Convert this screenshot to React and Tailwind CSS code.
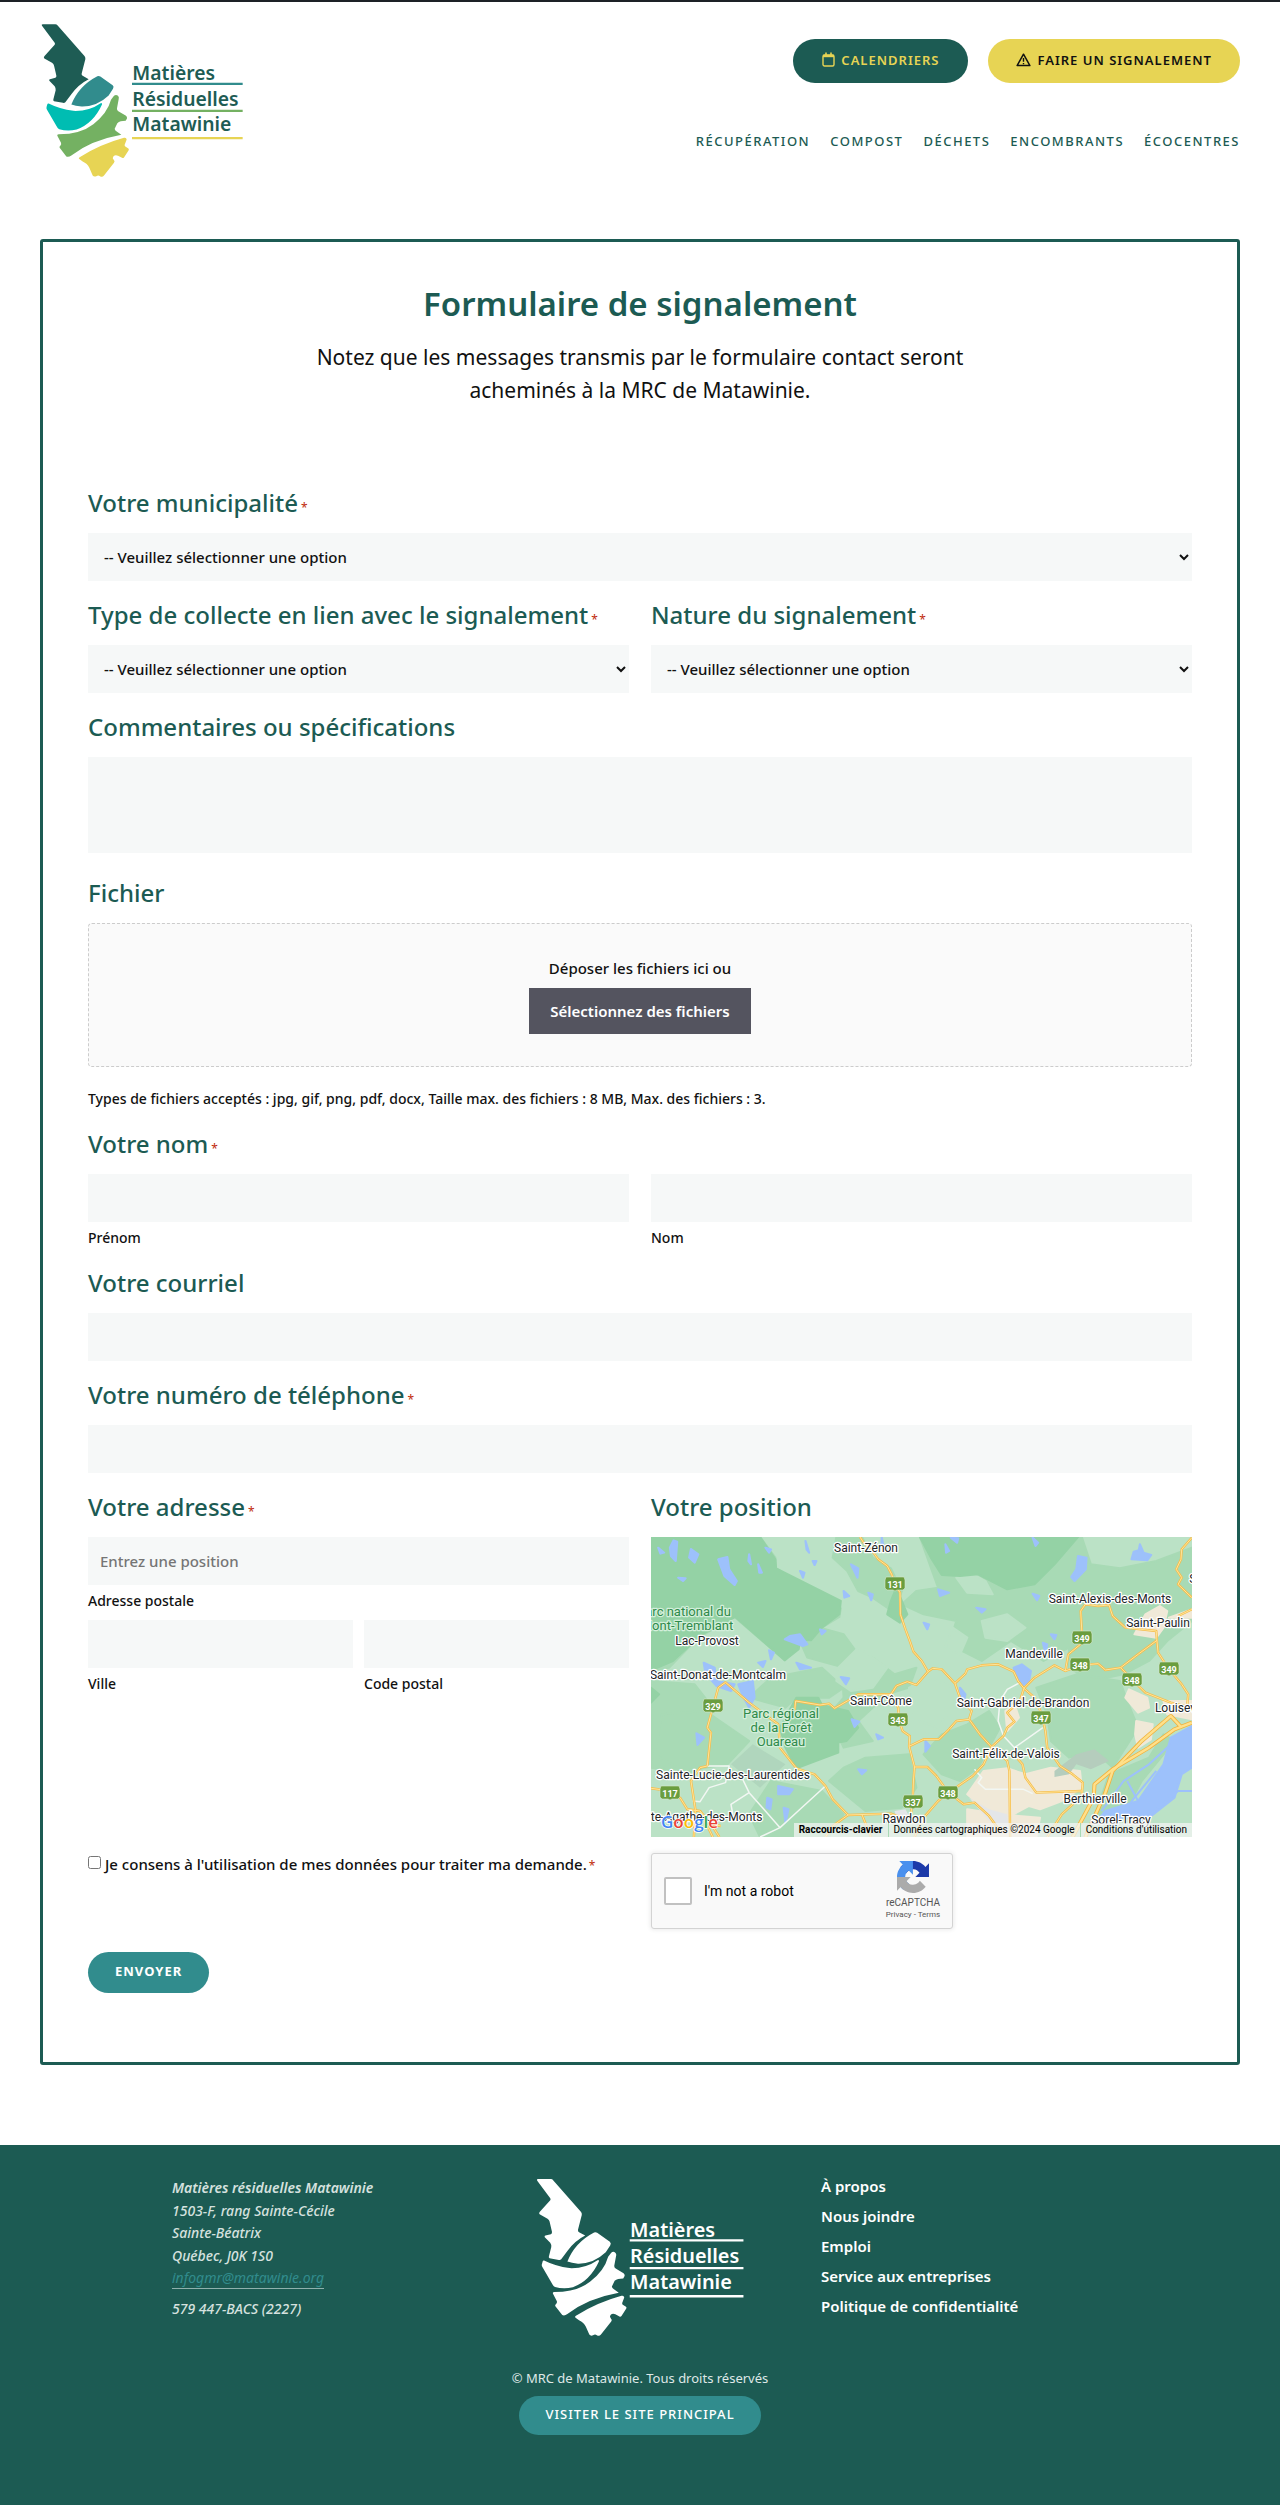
import React from "react";

const LOGO_SHAPES = [
  { fill: "#1e5c54", d: "M38 72 L76 72 Q80 72 83 76 L164 168 Q167 172 166 177 L155 220 Q154 225 158 227 L176 237 Q146 252 124 282 L106 306 Q103 309 99 308 L72 303 Q69 302 70 298 L77 270 Q78 264 74 258 L58 242 Q56 238 60 237 L76 233 Q80 231 79 226 L72 196 Q71 191 66 188 L43 175 Q40 172 43 168 L74 134 Q76 131 74 128 L36 77 Q33 72 38 72Z" },
  { fill: "#318c8d", d: "M202 228 Q207 226 211 229 L248 255 Q253 259 249 266 L236 286 Q200 320 155 319 Q136 318 124 313 Q146 257 202 228Z" },
  { fill: "#00bdb2", d: "M56 310 Q90 327 130 332 Q176 334 212 309 Q217 307 216 313 Q190 370 140 388 Q112 394 88 387 Q84 386 82 382 L51 329 Q48 324 50 319 L52 312 Q53 309 56 310Z" },
  { fill: "#74b162", d: "M252 287 Q258 282 264 287 Q268 291 266 297 L261 324 Q260 330 265 333 L288 347 Q292 350 291 355 L287 362 Q270 362 262 369 L254 386 Q254 391 260 394 L274 404 Q184 420 124 466 Q116 472 109 469 L105 464 L89 443 Q87 440 91 437 Q95 433 93 428 L82 407 Q80 402 86 402 Q152 402 190 372 Q232 340 243 299Z" },
  { fill: "#e7d454", d: "M282 413 Q289 411 290 418 L284 434 Q283 438 287 440 L294 444 Q298 446 296 450 L282 472 Q279 475 276 473 L264 467 Q256 463 250 469 Q246 474 251 479 Q256 483 252 488 L222 526 Q217 532 210 528 Q205 524 199 528 Q192 531 188 526 L178 503 Q172 490 158 484 L147 476 Q145 473 149 471 Q212 432 282 413Z" },
];

function Logo({ mono, className }) {
  const ink = mono ? "#ffffff" : "#1e5c54";
  return (
    <svg viewBox="30 66 612 470" className={className} role="img" aria-label="Matières Résiduelles Matawinie">
      {LOGO_SHAPES.map((s) => (
        <path key={s.fill} d={s.d} fill={mono ? "#ffffff" : s.fill} />
      ))}
      <g fill={ink} fontFamily='"Noto Sans", sans-serif' fontSize="58" fontWeight="600">
        <text x="307" y="240">Matières</text>
        <text x="307" y="317">Résiduelles</text>
        <text x="307" y="394">Matawinie</text>
      </g>
      <g strokeWidth="7">
        <path d="M306 251H638" stroke={mono ? ink : "#318c8d"} />
        <path d="M306 332H638" stroke={mono ? ink : "#74b162"} />
        <path d="M306 414H638" stroke={mono ? ink : "#e7d454"} />
      </g>
    </svg>
  );
}

function CalendarIcon() {
  return (
    <svg width="13" height="15" viewBox="0 0 13 15" fill="none" stroke="currentColor" aria-hidden="true">
      <rect x="1" y="3" width="11" height="11" rx="1.5" strokeWidth="1.4" />
      <path d="M1 4h11" strokeWidth="2.4" />
      <path d="M4 0.5v3M9 0.5v3" strokeWidth="1.6" />
    </svg>
  );
}

function WarningIcon() {
  return (
    <svg width="15" height="14" viewBox="0 0 15 14" fill="none" stroke="currentColor" strokeLinejoin="round" aria-hidden="true">
      <path d="M7.5 1.2 13.9 12.6H1.1Z" strokeWidth="1.5" />
      <path d="M7.5 5v3.8M7.5 10v1.2" strokeWidth="1.4" />
    </svg>
  );
}

function Required() {
  return <span className="ml-[3px] text-xs font-normal text-[#c02b0a]">*</span>;
}

const LABEL = "block h-16 pt-[18px] text-2xl leading-8 font-medium text-[#1c5b53]";
const INPUT = "block h-12 w-full min-w-0 bg-[#f6f8f8] px-3 text-[15px] font-medium text-[#111] placeholder:text-[#757575]";
const CAPTION = "block h-[27px] pt-1 text-sm leading-6 font-medium text-[#111]";

function SelectField({ id, label }) {
  return (
    <div>
      <label htmlFor={id} className={LABEL}>{label}<Required /></label>
      <select id={id} className="block h-12 w-full bg-[#f6f8f8] pl-3 text-[15px] font-medium text-[#111]">
        <option>-- Veuillez sélectionner une option</option>
      </select>
    </div>
  );
}

function Captioned({ id, caption, placeholder }) {
  return (
    <div>
      <input id={id} type="text" placeholder={placeholder} className={INPUT} />
      <label htmlFor={id} className={CAPTION}>{caption}</label>
    </div>
  );
}

/* Map geometry is kept in drawing units: 2.75 per pixel across, 3 per pixel down. */
const px = (x) => Math.round((x - 30) / 2.751);
const py = (y) => Math.round((y - 168) / 3);

const FOREST_MID = [
  "M330 168 L372 230 L374 262 L450 310 L552 382 L548 408 L500 440 L470 478 L440 470 L430 500 L398 538 L260 408 L160 470 L80 560 L30 568 L30 168Z",
  "M540 168 L610 168 L640 230 L690 262 L720 330 L700 395 L640 350 L600 330 L570 270 L530 230Z",
  "M770 168 L1215 168 L1240 250 L1320 262 L1420 240 L1518 200 L1518 420 L1450 480 L1400 540 L1330 580 L1240 600 L1180 560 L1180 500 L1110 540 L1020 480 L940 540 L850 490 L870 420 L780 400 L720 370 L760 330 L820 320 L800 260Z",
  "M555 560 L640 530 L700 580 L760 560 L740 620 L680 640 L600 720 L640 780 L560 800 L520 700 L560 650Z",
  "M360 590 L500 560 L560 620 L520 650 L430 650 L400 680 L300 650Z",
  "M1090 620 L1200 580 L1320 600 L1340 660 L1370 740 L1300 860 L1250 810 L1180 830 L1130 780 L1120 700Z",
  "M900 730 L960 690 L990 740 L960 800 L930 860 L880 900 L830 880 L780 820 L830 760Z",
  "M30 600 L150 610 L200 680 L170 760 L190 840 L150 880 L30 860Z",
  "M620 830 L740 820 L760 920 L720 980 L620 990 L520 900 L560 860Z",
  "M60 700 L180 690 L300 780 L240 850 L120 870 L40 820Z",
  "M360 900 L500 930 L560 1000 L520 1068 L330 1068 L300 1000Z",
  "M1290 880 L1400 830 L1440 760 L1470 780 L1380 900 L1330 1000 L1250 1010Z",
  "M460 430 L560 460 L600 520 L560 560 L460 530 L440 480Z",
];
const FOREST_DARK = [
  "M30 168 L330 168 L372 235 L374 262 L552 360 L548 400 L500 440 L470 478 L440 476 L436 505 L398 538 L262 408 L170 460 L90 540 L30 568Z",
  "M770 168 L1205 168 L1140 250 L1085 310 L1010 325 L930 280 L880 285 L830 282 L800 230Z",
  "M430 650 L490 650 L500 672 L572 690 L600 740 L568 780 L545 785 L545 815 L430 862 L400 800 L385 740Z",
  "M705 320 L735 400 L715 425 L680 400 L690 360Z",
  "M30 620 L52 640 L30 665Z",
];
const FOREST_LIGHT = [
  "M545 560 L600 500 L680 560 L640 620 L580 630 L540 600Z",
  "M740 620 L800 590 L860 620 L860 680 L820 740 L770 720 L740 680Z",
  "M888 262 L950 300 L970 340 L900 335 L870 290Z",
  "M940 420 L1010 400 L1060 440 L1010 480 L950 470Z",
  "M860 440 L900 470 L880 520 L840 500Z",
];
const BEIGE = [
  "M945 870 L1010 862 L1060 880 L1130 860 L1210 870 L1215 920 L1160 960 L1100 985 L1070 975 L1010 1010 L950 985 L900 940Z",
  "M1335 650 L1345 625 L1395 650 L1400 680 L1370 695Z",
  "M1365 720 L1410 730 L1405 775 L1370 800 L1362 760Z",
  "M1390 400 L1430 375 L1450 390 L1440 440 L1420 470 L1360 460Z",
  "M1005 690 L1030 670 L1042 710 L1010 750Z",
  "M1440 660 L1518 660 L1518 715 L1450 700Z",
  "M1455 410 L1518 385 L1518 410Z",
  "M900 985 L990 1000 L1100 1010 L1090 1068 L900 1068Z",
];
const WATER = [
  "M1518 735 L1460 770 L1440 850 L1370 960 L1280 990 L1265 1010 L1400 1010 L1470 950 L1490 880 L1518 860Z",
  "M215 235 L240 228 L245 265 L266 300 L260 312 L232 285Z",
  "M92 178 L102 182 L98 240 L85 225 L82 200Z",
  "M140 204 L160 220 L150 245 L135 230Z",
  "M1028 560 L1050 550 L1075 570 L1070 600 L1055 612 L1035 590Z",
  "M1205 225 L1228 230 L1226 265 L1195 300 L1186 288 L1200 265Z",
  "M1375 190 L1385 215 L1406 222 L1395 238 L1352 235 L1358 212 L1372 208Z",
  "M175 545 L205 560 L210 600 L260 610 L250 630 L210 615 L180 578Z",
  "M270 610 L310 600 L315 650 L300 680 L285 650Z",
  "M412 465 L440 460 L460 490 L448 495 L398 475Z",
  "M155 757 L176 770 L158 792Z",
  "M325 545 L345 540 L338 558Z M430 545 L470 560 L440 565Z M355 508 L368 515 L360 535Z M552 588 L575 592 L566 610Z",
  "M880 620 L895 640 L890 665 L883 650Z M785 780 L797 795 L785 812Z M600 865 L622 868 L610 880Z M582 715 L603 722 L590 738Z",
  "M380 915 L420 925 L410 940 L380 940Z M395 980 L408 985 L400 1025Z M350 950 L362 955 L358 985 L348 980Z",
  "M665 170 L672 210 L664 190Z M580 250 L600 262 L598 290Z M628 335 L640 340 L636 358Z M820 325 L850 335 L825 345Z M840 190 L850 210 L842 215Z",
  "M855 170 L875 172 L872 185Z M780 425 L795 430 L790 445Z M925 380 L950 385 L940 395Z M1080 338 L1098 345 L1092 358Z M1130 460 L1145 462 L1140 475Z M1108 485 L1120 490 L1115 515Z",
  "M1080 170 L1095 185 L1088 195Z M440 270 L452 275 L448 290Z M345 200 L360 205 L355 215Z M50 200 L66 215 L56 218Z M105 290 L125 292 L118 300Z M325 250 L335 275 L328 275Z",
  "M455 180 L465 215 L458 205Z M475 240 L485 240 L480 252Z M300 220 L305 250 L298 240Z M560 330 L575 345 L562 350Z M495 445 L510 450 L500 460Z M650 760 L668 770 L655 775Z",
];
const ROADS = [
  "M605 168 L615 185 L640 212 L655 235 L680 255 L692 280 L702 310 L715 335 L716 400 L730 445 L742 480 L752 512 L775 540 L792 572",
  "M792 572 L805 562 L830 565 L866 607 L895 578 L900 565 L940 553 L985 550 L1028 572 L1040 600 L1056 622",
  "M792 572 L760 612 L735 602 L705 615 L690 640 L710 680 L712 715 L722 750 L742 765 L740 796 L755 858 L752 900 L750 955 L745 1000",
  "M690 640 L600 640 L570 660 L535 682 L520 668 L495 672 L428 660 L425 690",
  "M866 607 L880 650 L912 690 L905 715 L870 720 L850 745 L822 775 L780 775 L740 796",
  "M905 715 L935 760 L967 798 L945 850 L915 885 L875 915 L848 935 L820 960 L780 1010 L755 1068",
  "M967 798 L1000 765 L1010 740 L1030 722 L1010 695 L1045 660 L1056 622 L1085 590 L1140 553 L1170 570 L1212 553 L1260 548 L1280 567 L1322 560 L1353 595 L1390 635 L1460 665 L1518 680",
  "M1056 622 L1085 650 L1105 700 L1115 750 L1120 800 L1155 855 L1190 880 L1218 905 L1215 945 L1160 1000 L1120 1068",
  "M1170 570 L1178 520 L1217 485 L1212 390 L1225 370 L1260 375 L1290 372 L1300 405 L1335 440 L1420 450 L1422 480 L1425 515 L1455 565 L1490 610 L1508 640 L1505 675",
  "M1422 478 L1370 520 L1322 560",
  "M1518 170 L1490 205 L1488 235 L1475 265 L1490 290 L1480 310 L1518 350 M1480 405 L1518 385",
  "M755 858 L790 858 L815 885 L848 935 L890 970 L920 965 L960 1005 L990 1050",
  "M967 798 L1010 840 L1016 870 L1018 1068",
  "M1020 810 L1052 850 L1060 890 L1090 935 L1215 930",
  "M30 922 L83 930 L110 950 L130 985 L165 990 L195 1030 L222 1035 M148 1068 L152 985 L140 900 L165 860 L185 855",
  "M202 672 L215 620 L235 604 L300 665 L380 730 L385 800 L430 862 L480 880 L510 915 L530 955 L572 1002 L690 998 L720 1010",
  "M202 672 L185 740 L195 755 L185 855",
  "M572 1002 L530 1035 L510 1068 M610 1000 L635 1068",
  "M165 990 L200 1068 M190 1020 L218 1068",
];
const HIGHWAYS = [
  "M1190 1068 L1248 950 L1250 910 L1300 865 L1400 800 L1470 745 L1518 725",
  "M1225 1068 L1280 935 L1300 870 L1380 780 L1460 705 L1490 740",
];
const WHITE_ROADS = [
  "M185 855 L245 855 L235 905 L190 920 L165 962 L145 960",
  "M280 890 L300 935 L385 1040 L440 985 L510 915 M300 935 L250 970 L255 1000 M385 1040 L330 1068",
  "M1045 605 L1010 625 L990 660 L985 720 L1000 765 L1030 800 L1108 740",
  "M920 865 L940 890 L930 905 L950 925 L1055 925 L1080 938",
];
const SHIELDS = [
  ["131", 702, 308], ["349", 1216, 471], ["348", 1211, 553], ["348", 1352, 596], ["349", 1456, 565], ["329", 201, 674],
  ["343", 710, 716], ["347", 1104, 712], ["117", 83, 936], ["348", 847, 936], ["337", 751, 962],
];
const TOWNS = [
  ["Saint-Zénon", 621, 214], ["Lac-Provost", 185, 493], ["Saint-Donat-de-Montcalm", 214, 594], ["Saint-Côme", 663, 671],
  ["Saint-Alexis-des-Monts", 1293, 367], ["Saint-Paulin", 1424, 438], ["Mandeville", 1085, 530], ["Saint-Gabriel-de-Brandon", 1054, 678],
  ["Louiseville", 1494, 694], ["Saint-Félix-de-Valois", 1007, 832], ["Sainte-Lucie-des-Laurentides", 255, 894],
  ["Berthierville", 1252, 965], ["Sorel-Tracy", 1324, 1029], ["Rawdon", 725, 1027], ["Sainte-Agathe-des-Monts", 152, 1020], ["Saint-Boniface", 1616, 306],
];
const PARKS = [
  ["Parc national du", 122, 404], ["Mont-Tremblant", 130, 446],
  ["Parc régional", 389, 711], ["de la Forêt", 389, 753], ["Ouareau", 389, 796],
];
const GOOGLE = [["G", "#4285f4"], ["o", "#ea4335"], ["o", "#fbbc04"], ["g", "#4285f4"], ["l", "#34a853"], ["e", "#ea4335"]];

function Shapes({ list, fill }) {
  return list.map((d) => <path key={d} d={d} fill={fill} stroke={fill} strokeWidth="6" strokeLinejoin="round" />);
}

function Lines({ list, stroke, width }) {
  return list.map((d) => (
    <path key={d} d={d} fill="none" stroke={stroke} strokeWidth={width} strokeLinejoin="round" vectorEffect="non-scaling-stroke" />
  ));
}

function PositionMap() {
  return (
    <div className="relative h-[300px] w-full overflow-hidden font-[Roboto,sans-serif]">
      <svg viewBox="0 0 541 300" preserveAspectRatio="xMidYMid slice" className="block h-full w-full" role="img" aria-label="Carte de la région de Matawinie">
        <rect width="541" height="300" fill="#bbe2c6" />
        <g transform="scale(0.3635 0.3333) translate(-30 -168)">
          <Shapes list={FOREST_MID} fill="#a8dab5" />
          <Shapes list={FOREST_LIGHT} fill="#bbe2c6" />
          <Shapes list={FOREST_DARK} fill="#94d2a5" />
          <Shapes list={BEIGE} fill="#f0e9d8" />
          <path d="M250 850 L310 790 L400 850 L330 920Z" fill="#b0d6bd" />
          <path d="M1140 870 L1200 820 L1250 805 L1290 840 L1240 865 L1200 850 L1180 880 L1140 888Z" fill="#b5cdbd" />
          <path d="M905 950 L960 985 L1010 1000 L1015 1050 L960 1020Z M700 990 L730 985 L740 1005 L705 1010Z" fill="#e4e6e8" />
          <Shapes list={WATER} fill="#9dc1fb" />
          <Lines list={["M1270 990 L1330 900 L1400 850 L1460 790 M1300 1040 L1360 950 L1420 870 M1380 1020 L1480 930 L1518 930 M1340 900 L1370 960"]} stroke="#9dc1fb" width="2" />
          <Lines list={WHITE_ROADS} stroke="#f2f7f3" width="1.5" />
          <Lines list={ROADS} stroke="#f6bd4b" width="2.4" />
          <Lines list={ROADS} stroke="#ffe59a" width="1" />
          <Lines list={HIGHWAYS} stroke="#f2b13c" width="4" />
          <Lines list={HIGHWAYS} stroke="#ffe08a" width="2.4" />
        </g>
        <g textAnchor="middle" fontFamily="Roboto, sans-serif">
          {SHIELDS.map(([n, x, y]) => (
            <g key={n + x}>
              <path d={`M${px(x) - 9} ${py(y) - 7}h18l1 3v8l-2 2h-6l-2 1l-2 -1h-6l-2 -2v-8Z`} fill="#6a9d3f" stroke="#d7e8cf" strokeWidth="0.6" />
              <text x={px(x)} y={py(y) + 4} fontSize="9" fontWeight="700" fill="#fff">{n}</text>
            </g>
          ))}
          <g fontSize="12" fill="#222427" stroke="#fff" strokeWidth="2.5" strokeLinejoin="round" paintOrder="stroke">
            {TOWNS.map(([t, x, y]) => <text key={t} x={px(x)} y={py(y)}>{t}</text>)}
          </g>
          <g fontSize="13" fill="#2f8a4a" stroke="#d3efdb" strokeWidth="2.5" strokeLinejoin="round" paintOrder="stroke">
            {PARKS.map(([t, x, y]) => <text key={t} x={px(x)} y={py(y)}>{t}</text>)}
          </g>
        </g>
        <text x="10" y="291" fontSize="17" fontWeight="600" fontFamily='"Open Sans", sans-serif' stroke="#fff" strokeWidth="1.5" paintOrder="stroke">
          {GOOGLE.map(([c, f], i) => <tspan key={i} fill={f}>{c}</tspan>)}
        </text>
      </svg>
      <div className="absolute right-0 bottom-0 flex h-[14px] divide-x divide-[#a8dab5] bg-[#f5f5f5]/70 text-[10px] leading-[14px] text-black">
        <button type="button" className="px-[5px] font-bold">Raccourcis-clavier</button>
        <span className="px-[5px]">Données cartographiques ©2024 Google</span>
        <a href="#conditions" className="px-[5px]">Conditions d'utilisation</a>
      </div>
    </div>
  );
}

function Recaptcha() {
  return (
    <div className="flex h-[76px] w-[302px] items-center rounded-[3px] border border-[#d3d3d3] bg-[#f9f9f9] pr-[9px] pl-3 font-[Roboto,sans-serif] shadow-[0_0_4px_1px_rgba(0,0,0,0.08)]">
      <input id="robot" type="checkbox" className="size-7 appearance-none rounded-[2px] border-2 border-[#c1c1c1] bg-white" />
      <label htmlFor="robot" className="ml-3 flex-1 text-sm text-black">I'm not a robot</label>
      <div className="flex w-[60px] flex-col items-center text-[#555]">
        <svg width="32" height="32" viewBox="0 0 64 64" aria-hidden="true">
          <path fill="#1c3aa9" d="M64 31.955l-.033-1.37V4.687l-7.16 7.16C50.948 4.674 42.033.093 32.05.093c-10.4 0-19.622 4.96-25.458 12.64l11.736 11.86a15.55 15.55 0 0 1 4.754-5.334c2.05-1.6 4.952-2.906 8.968-2.906.485 0 .86.057 1.135.163 4.976.393 9.288 3.14 11.828 7.124l-8.307 8.307L64 31.953" />
          <path fill="#4a90ee" d="M31.862.094l-1.37.033H4.594l7.16 7.16C4.58 13.147 0 22.06 0 32.046c0 10.4 4.96 19.622 12.64 25.458L24.5 45.768a15.55 15.55 0 0 1-5.334-4.754c-1.6-2.05-2.906-4.952-2.906-8.968 0-.485.057-.86.163-1.135.393-4.976 3.14-9.288 7.124-11.828l8.307 8.307L31.86.095" />
          <path fill="#ababab" d="M.001 32.045l.033 1.37v25.898l7.16-7.16c5.86 7.173 14.774 11.754 24.76 11.754 10.4 0 19.622-4.96 25.458-12.64l-11.736-11.86a15.55 15.55 0 0 1-4.754 5.334c-2.05 1.6-4.952 2.906-8.968 2.906-.485 0-.86-.057-1.135-.163-4.976-.393-9.288-3.14-11.828-7.124l8.307-8.307c-10.522.04-22.4.066-27.295-.005" />
        </svg>
        <span className="mt-1 text-[10px] leading-3">reCAPTCHA</span>
        <span className="text-[8px] leading-3 whitespace-nowrap"><a href="#privacy">Privacy</a> - <a href="#terms">Terms</a></span>
      </div>
    </div>
  );
}

function Header() {
  return (
    <header className="flex items-start justify-between px-10 pt-5">
      <a href="#accueil"><Logo className="h-[157px] w-[204px]" /></a>
      <div className="flex flex-col items-end pt-[17px]">
        <div className="flex gap-5 text-[13px] leading-5 font-semibold tracking-[1px]">
          <a href="#calendriers" className="flex h-11 items-center gap-[6px] rounded-full bg-[#1c5b53] px-[29px] pb-[3px] text-[#e7d454]"><CalendarIcon />CALENDRIERS</a>
          <a href="#signalement" className="flex h-11 items-center gap-[6px] rounded-full bg-[#e7d454] px-7 pb-[3px] text-[#111]"><WarningIcon />FAIRE UN SIGNALEMENT</a>
        </div>
        <nav className="mt-12 flex gap-5 text-[13px] leading-5 font-medium tracking-[1.5px] text-[#1c5b53]">
          <a href="#recuperation">RÉCUPÉRATION</a>
          <a href="#compost">COMPOST</a>
          <a href="#dechets">DÉCHETS</a>
          <a href="#encombrants">ENCOMBRANTS</a>
          <a href="#ecocentres">ÉCOCENTRES</a>
        </nav>
      </div>
    </header>
  );
}

function ReportForm() {
  return (
    <form className="mt-[62px]">
      <SelectField id="municipalite" label="Votre municipalité" />
      <div className="grid grid-cols-2 gap-x-[22px]">
        <SelectField id="collecte" label="Type de collecte en lien avec le signalement" />
        <SelectField id="nature" label="Nature du signalement" />
      </div>
      <label htmlFor="commentaires" className={LABEL}>Commentaires ou spécifications</label>
      <textarea id="commentaires" className="block h-24 w-full resize-none bg-[#f6f8f8] p-3 text-[15px]" />
      <label htmlFor="fichier" className="mt-[6px] block h-16 pt-[18px] text-2xl leading-8 font-medium text-[#1c5b53]">Fichier</label>
      <div className="flex h-36 flex-col items-center rounded border border-dashed border-[#ccc] bg-[#fafafa] pt-8">
        <span className="text-[15px] leading-6 font-medium text-[#111]">Déposer les fichiers ici ou</span>
        <button id="fichier" type="button" className="mt-2 h-[46px] bg-[#54545f] px-[21px] text-[15px] font-semibold text-white">Sélectionnez des fichiers</button>
      </div>
      <p className="h-[43px] pt-5 text-sm leading-6 font-medium text-[#111]">Types de fichiers acceptés : jpg, gif, png, pdf, docx, Taille max. des fichiers : 8 MB, Max. des fichiers : 3.</p>
      <fieldset>
        <legend className={LABEL}>Votre nom<Required /></legend>
        <div className="grid grid-cols-2 gap-x-[22px]">
          <Captioned id="prenom" caption="Prénom" />
          <Captioned id="nom" caption="Nom" />
        </div>
      </fieldset>
      <label htmlFor="courriel" className={LABEL}>Votre courriel</label>
      <input id="courriel" type="email" className={INPUT} />
      <label htmlFor="telephone" className={LABEL}>Votre numéro de téléphone<Required /></label>
      <input id="telephone" type="tel" className={INPUT} />
      <div className="grid grid-cols-2 gap-x-[22px]">
        <fieldset>
          <legend className={LABEL}>Votre adresse<Required /></legend>
          <Captioned id="adresse" caption="Adresse postale" placeholder="Entrez une position" />
          <div className="mt-2 grid grid-cols-2 gap-x-[11px]">
            <Captioned id="ville" caption="Ville" />
            <Captioned id="code" caption="Code postal" />
          </div>
        </fieldset>
        <div>
          <div className={LABEL}>Votre position</div>
          <PositionMap />
        </div>
        <div className="mt-4 flex items-start pt-[3px]">
          <input id="consentement" type="checkbox" className="size-[13px]" />
          <label htmlFor="consentement" className="ml-1 text-[15px] leading-4 font-medium text-[#111]">Je consens à l'utilisation de mes données pour traiter ma demande.<span className="ml-[2px] text-xs font-normal text-[#c02b0a]">*</span></label>
        </div>
        <div className="mt-4"><Recaptcha /></div>
      </div>
      <button type="submit" className="mt-[23px] h-[41px] rounded-full bg-[#318c8d] px-[27px] pb-[2px] text-[13px] font-bold tracking-[1px] text-white">ENVOYER</button>
    </form>
  );
}

const FOOTER_LINKS = ["À propos", "Nous joindre", "Emploi", "Service aux entreprises", "Politique de confidentialité"];

function Footer() {
  return (
    <footer className="mt-20 bg-[#1c5b53] pt-8 pb-[70px]">
      <div className="grid grid-cols-[1fr_auto_1fr]">
        <address className="pl-[172px] text-sm font-medium text-[#d5e1df]">
          <div className="leading-[22px] font-semibold">Matières résiduelles Matawinie</div>
          <div className="leading-[23px]">1503-F, rang Sainte-Cécile</div>
          <div className="leading-[22px]">Sainte-Béatrix</div>
          <div className="leading-[23px]">Québec, J0K 1S0</div>
          <a href="mailto:infogmr@matawinie.org" className="inline-block border-b border-[#8fb0ac] leading-[21px] font-normal text-[#318c8d]">infogmr@matawinie.org</a>
          <div className="mt-2 leading-6">579 447-BACS (2227)</div>
        </address>
        <Logo mono className="h-[161px] w-[210px]" />
        <ul className="-mt-[6px] pl-[76px] text-[15px] leading-[30px] font-semibold text-white">
          {FOOTER_LINKS.map((t) => <li key={t}><a href="#pied">{t}</a></li>)}
        </ul>
      </div>
      <div className="mt-[30px] flex flex-col items-center">
        <p className="text-[13px] leading-5 text-[#dfe8e7]">© MRC de Matawinie. Tous droits réservés</p>
        <a href="#principal" className="mt-2 flex h-[39px] items-center rounded-full bg-[#318c8d] px-[26px] pb-[2px] text-[13px] font-medium tracking-[1px] text-white">VISITER LE SITE PRINCIPAL</a>
      </div>
    </footer>
  );
}

export default function App() {
  return (
    <div className='border-t-2 border-[#1d2126] bg-white font-["Noto_Sans","Open_Sans",sans-serif]'>
      <Header />
      <main className="mx-10 mt-[60px] rounded-[3px] border-[3px] border-[#1c5b53] px-[45px] pt-10 pb-[69px]">
        <h1 className="text-center text-[33px] leading-11 font-semibold text-[#1c5b53]">Formulaire de signalement</h1>
        <p className="mx-auto mt-[15px] max-w-[680px] text-center text-[21px] leading-[33px] text-[#111]">
          Notez que les messages transmis par le formulaire contact seront acheminés à la MRC de Matawinie.
        </p>
        <ReportForm />
      </main>
      <Footer />
    </div>
  );
}
